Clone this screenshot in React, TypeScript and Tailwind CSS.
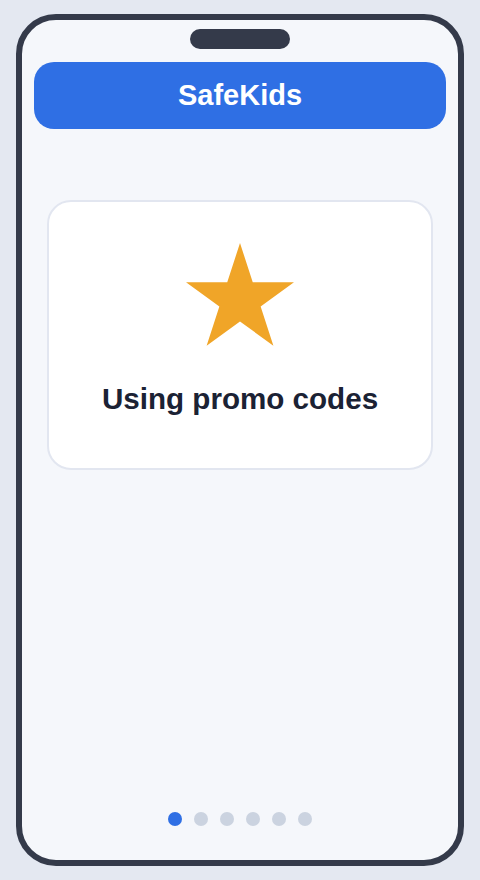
const dots = [0, 1, 2, 3, 4, 5];

function Star() {
  return (
    <svg width="108" height="103" viewBox="0 0 108 103">
      <polygon
        fill="#f0a528"
        points="54,0 66.75,39.24 108,39.25 74.64,63.51 87.39,102.75 54,78.5 20.61,102.75 33.36,63.51 0,39.25 41.25,39.24"
      />
    </svg>
  );
}

export default function App() {
  const active = 0;

  return (
    <div className="w-[480px] h-[880px] bg-[#e4e8f1] pt-[14px] pl-4 font-['Liberation_Sans',Arial,sans-serif]">
      <div className="w-[448px] h-[852px] rounded-[40px] border-[6px] border-[#343a4a] bg-[#f5f7fb] flex flex-col overflow-hidden">
        <div className="mt-[9px] mx-auto w-[100px] h-[20px] rounded-full bg-[#343a4a]" />

        <div className="mt-[13px] mx-3 h-[67px] rounded-[20px] bg-[#2f6fe4] flex items-center justify-center">
          <h1 className="text-[29px] leading-[1.2] font-bold text-white">SafeKids</h1>
        </div>

        <div className="mt-[71px] mx-[25px] h-[270px] rounded-[24px] border-2 border-[#e2e6f0] bg-white flex flex-col items-center pt-[41px]">
          <Star />
          <p className="mt-[35px] text-[29.6px] leading-[36px] font-bold text-[#1b2234]">
            Using promo codes
          </p>
        </div>

        <div className="flex-1" />

        <div className="flex justify-center gap-3 pb-[34px]">
          {dots.map((d) => (
            <span
              key={d}
              className={`w-[14px] h-[14px] rounded-full ${d === active ? 'bg-[#2f6fe4]' : 'bg-[#cbd3e0]'}`}
            />
          ))}
        </div>
      </div>
    </div>
  );
}
